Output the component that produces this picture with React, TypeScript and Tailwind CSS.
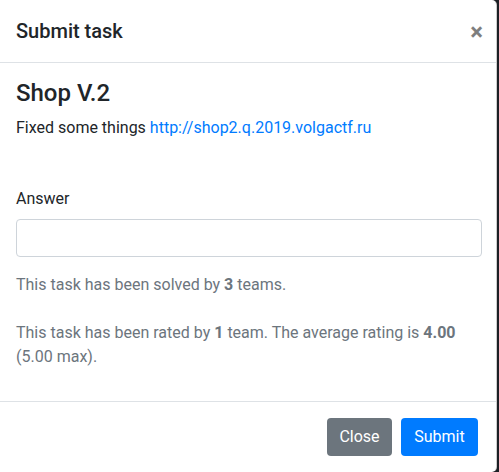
import React from 'react';

const App: React.FC = () => {
  return (
    <div className="w-[499px] h-[472px] bg-[#1c1f24] overflow-hidden" style={{ fontFamily: 'Roboto, "Liberation Sans", sans-serif' }}>
      <div className="w-[497px] h-[472px] bg-white rounded-r-[5px] border-r border-black/20 flex flex-col text-[#212529] text-base">
        {/* Header */}
        <div className="flex items-start justify-between pl-4 pr-[13px] py-4 border-b border-[#dee2e6]">
          <h5 className="text-xl font-medium leading-[30px]">Submit task</h5>
          <button className="text-2xl font-bold leading-none text-black opacity-50 -mt-[2px] pt-[6px]">×</button>
        </div>

        {/* Body */}
        <div className="p-4 flex-1">
          <h4 className="text-2xl font-medium leading-[1.2] mb-2">Shop V.2</h4>
          <p className="leading-6">
            Fixed some things{' '}
            <a href="#" className="text-[#007bff]">http://shop2.q.2019.volgactf.ru</a>
          </p>

          <div className="mt-[47px] mb-4">
            <label className="block leading-6 mb-2">Answer</label>
            <input
              type="text"
              className="block w-[466px] h-[38px] px-3 border border-[#ced4da] rounded-[4px] outline-none"
            />
          </div>

          <p className="text-[#6c757d] leading-6 mt-[1px]">
            This task has been solved by <b className="font-bold">3</b> teams.
          </p>
          <p className="text-[#6c757d] leading-6 mt-6">
            This task has been rated by <b className="font-bold">1</b> team. The average rating is{' '}
            <b className="font-bold">4.00</b> (5.00 max).
          </p>
        </div>

        {/* Footer */}
        <div className="flex items-center justify-end gap-[9px] pl-4 pr-[18px] py-4 border-t border-[#dee2e6]">
          <button className="h-[38px] w-[65px] rounded-[4px] bg-[#6c757d] text-white leading-6">Close</button>
          <button className="h-[38px] w-[77px] rounded-[4px] bg-[#007bff] text-white leading-6">Submit</button>
        </div>
      </div>
    </div>
  );
};

export default App;
